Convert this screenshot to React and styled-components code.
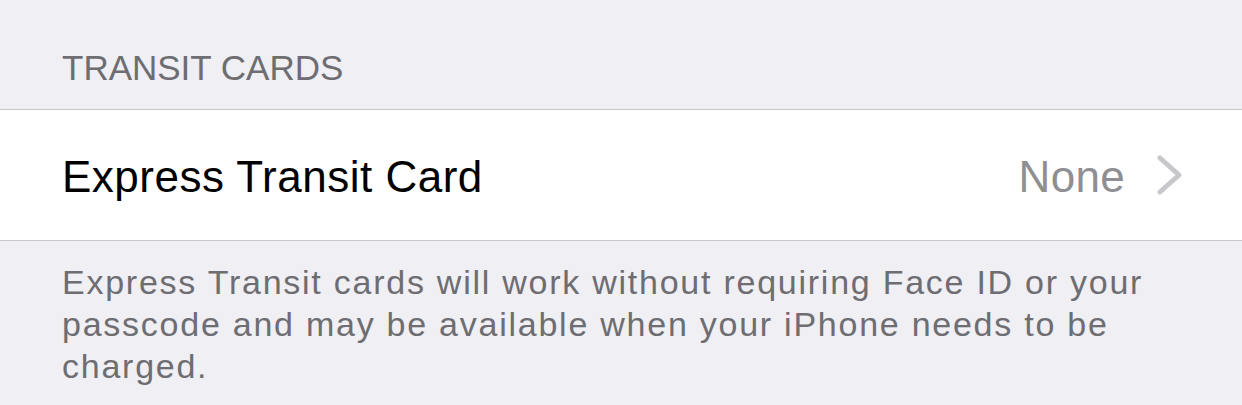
import styled, { createGlobalStyle } from 'styled-components';

const GlobalStyle = createGlobalStyle`
    html, body {
        margin: 0;
        padding: 0;
        background: #efeff4;
    }
    body {
        font-family: 'Liberation Sans', Arial, sans-serif;
        -webkit-font-smoothing: antialiased;
    }
`;

const Page = styled.div`
    width: 1242px;
    height: 405px;
    background: #efeff4;
    overflow: hidden;
`;

const SectionHeader = styled.div`
    height: 109px;
    box-sizing: border-box;
    padding: 48px 62px 0;
    font-size: 35px;
    line-height: 40px;
    color: #6d6d72;
`;

const Group = styled.div`
    background: #ffffff;
    border-top: 1px solid #c8c7cc;
    border-bottom: 1px solid #c8c7cc;
`;

const Row = styled.div`
    height: 130px;
    box-sizing: border-box;
    display: flex;
    align-items: center;
    padding: 4px 59px 0 62px;
`;

const Label = styled.span`
    flex: 1;
    font-size: 44px;
    color: #000000;
    letter-spacing: 0.5px;
`;

const Value = styled.span`
    font-size: 44px;
    color: #8e8e93;
    margin-right: 32px;
    letter-spacing: 0.3px;
`;

const Chevron = styled.svg`
    width: 26px;
    height: 40px;
    display: block;
    margin-top: -4px;
`;

const Footer = styled.p`
    margin: 0;
    padding: 20px 62px 0;
    font-size: 34px;
    line-height: 42px;
    color: #6d6d72;
    letter-spacing: 1.75px;
`;

export default function App() {
    return (
        <Page>
            <GlobalStyle />
            <SectionHeader>TRANSIT CARDS</SectionHeader>
            <Group>
                <Row>
                    <Label>Express Transit Card</Label>
                    <Value>None</Value>
                    <Chevron viewBox="0 0 26 40">
                        <path d="M3 3 L22 20 L3 37" fill="none" stroke="#c7c7cc" strokeWidth="5" strokeLinecap="round" strokeLinejoin="round" />
                    </Chevron>
                </Row>
            </Group>
            <Footer>
                Express Transit cards will work without requiring Face ID or your passcode and may be available when your iPhone needs to be charged.
            </Footer>
        </Page>
    );
}
